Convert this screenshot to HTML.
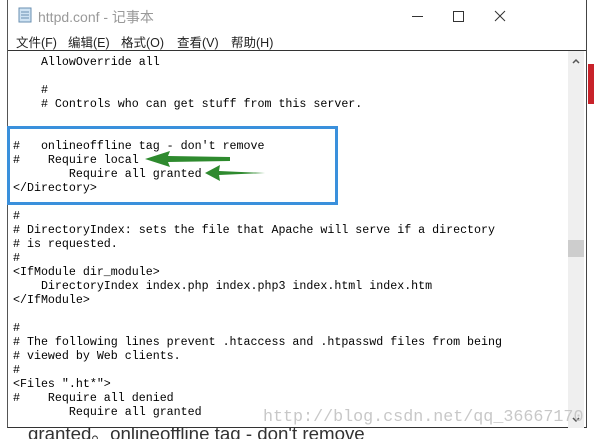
<!DOCTYPE html>
<html><head><meta charset="utf-8"><style>
body{margin:0;width:594px;height:439px;overflow:hidden;background:#fff;position:relative;font-family:"Liberation Sans","Noto Sans CJK SC",sans-serif}
.win{position:absolute;left:7px;top:0;width:580px;height:428px;background:#fff;border-left:1px solid #555;border-right:1px solid #444;border-bottom:1px solid #333;box-sizing:border-box}
.title{position:absolute;left:0;top:0;height:27px;width:100%;}
.title span{position:absolute;left:30px;top:7px;font-size:14px;color:#999}
.menu{position:absolute;top:32px;left:8px;font-size:12.5px;color:#222;white-space:nowrap}
.menu b{font-weight:normal;display:inline-block}
.edit{position:absolute;left:0;top:50px;width:100%;height:378px;border-top:1px solid #333;box-sizing:border-box}
pre{margin:0;position:absolute;left:5px;top:5px;font-family:"Liberation Mono","Noto Sans CJK SC",monospace;font-size:11.65px;line-height:14px;color:#000}
.sb{position:absolute;right:2px;top:51px;width:16px;height:377px;background:#efefef}
.thumb{position:absolute;left:0;top:189px;width:16px;height:17px;background:#cdcdcd}
</style></head><body>
<div style="position:absolute;left:588px;top:64px;width:6px;height:40px;background:#c8222a"></div>
<div style="position:absolute;left:0;top:428px;width:594px;height:11px;background:#fff;overflow:hidden"><div style="position:absolute;left:28px;top:-9px;font-size:18.7px;color:#333;white-space:nowrap">granted。onlineoffline tag - don't remove</div></div>
<div class="win">
 <div class="title">
  <svg style="position:absolute;left:10px;top:7px" width="14" height="16"><rect x="1" y="1" width="12" height="14" fill="#cfe3f3" stroke="#6a8fb0"/><path d="M3 5h8M3 8h8M3 11h8" stroke="#6a8fb0"/></svg>
  <span>httpd.conf - 记事本</span>
  <div style="position:absolute;left:404px;top:16px;width:11px;height:1px;background:#333"></div>
  <div style="position:absolute;left:445px;top:11px;width:9px;height:9px;border:1px solid #333"></div>
  <svg style="position:absolute;left:486px;top:10px" width="12" height="12"><path d="M1 1L11 11M11 1L1 11" stroke="#333"/></svg>
 </div>
 <div class="menu"><b style="width:52px">文件(F)</b><b style="width:53px">编辑(E)</b><b style="width:56px">格式(O)</b><b style="width:54px">查看(V)</b><b>帮助(H)</b></div>
 <div class="edit">
<pre>    AllowOverride all

    #
    # Controls who can get stuff from this server.


#   onlineoffline tag - don't remove
#    Require local
        Require all granted
&lt;/Directory&gt;

#
# DirectoryIndex: sets the file that Apache will serve if a directory
# is requested.
#
&lt;IfModule dir_module&gt;
    DirectoryIndex index.php index.php3 index.html index.htm
&lt;/IfModule&gt;

#
# The following lines prevent .htaccess and .htpasswd files from being
# viewed by Web clients.
#
&lt;Files ".ht*"&gt;
#    Require all denied
        Require all granted</pre>
 </div>
 <div class="sb"><svg style="position:absolute;left:4px;top:7px" width="8" height="6"><path d="M1 5L4 2L7 5" stroke="#555" stroke-width="1.5" fill="none"/></svg><div class="thumb"></div><svg style="position:absolute;left:4px;top:366px" width="8" height="6"><path d="M1 1L4 4L7 1" stroke="#555" stroke-width="1.5" fill="none"/></svg></div>
</div>
<div style="position:absolute;left:7px;top:126px;width:331px;height:79px;border:3px solid #3a90dc;box-sizing:border-box"></div>
<svg style="position:absolute;left:0;top:0" width="594" height="439">
 <path d="M145 159L170 151L168 156L230 157L230 161L168 162L170 167Z" fill="#2e8a2e"/>
 <path d="M205 173L220 165L219 171L265 173L219 175L220 181Z" fill="#2e8a2e"/>
</svg>
<div style="position:absolute;left:263px;top:408px;font-family:'Liberation Mono',monospace;font-size:16.7px;color:#c8c8c8;white-space:nowrap">http://blog.csdn.net/qq_36667170</div>
</body></html>
